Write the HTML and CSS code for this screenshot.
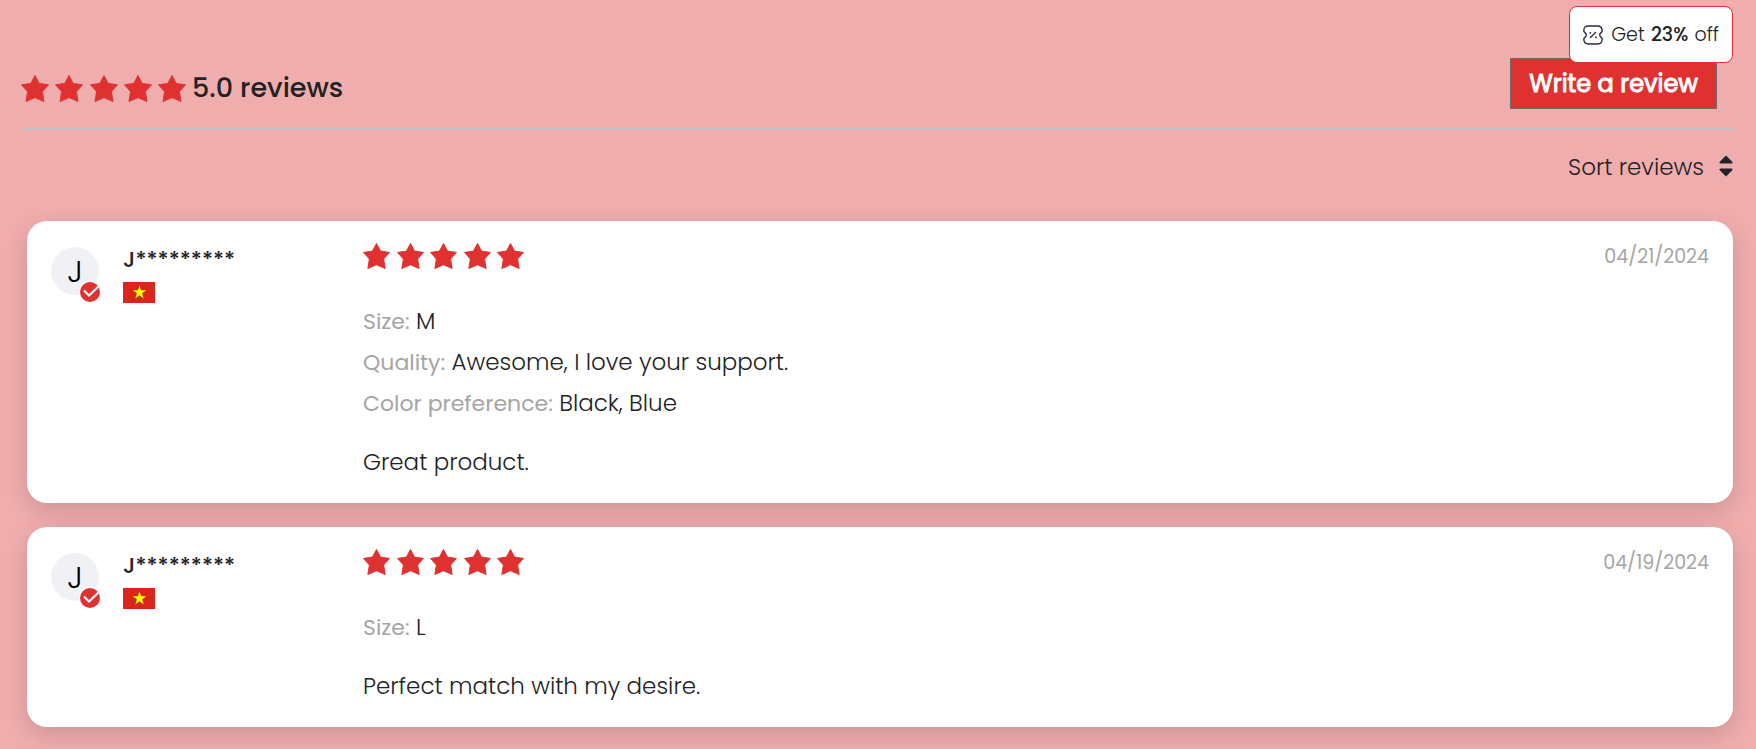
FILE: index.html
```
<!DOCTYPE html>
<html lang="en">
<head>
    <meta charset="UTF-8">
    <meta name="viewport" content="width=device-width, initial-scale=1.0">
    <title>Customer Reviews</title>
    <link rel="stylesheet" href="styles.css">
</head>
<body>
    <!-- shared icons -->
    <svg class="sprite" aria-hidden="true">
        <symbol id="star" viewBox="0 0 28 27">
            <path d="M14 0.5 L18.2 8.4 L27.5 9.8 L21.4 16.6 L23 26.5 L14 22.6 L5 26.5 L6.6 16.6 L0.5 9.8 L9.8 8.4 Z" stroke-width="1" stroke-linejoin="round"/>
        </symbol>
        <symbol id="check" viewBox="0 0 22 22">
            <circle cx="11" cy="11" r="11" fill="#fff"/>
            <circle cx="11" cy="11" r="10" fill="#e03131"/>
            <path d="M5 9.5 L10 14.5 L19.5 5.5" fill="none" stroke="#fff" stroke-width="2"/>
        </symbol>
        <symbol id="flag" viewBox="0 0 32 21">
            <path d="M0 0H32V21H0Z" fill="#da251d"/>
            <path d="M16.5 3.2 L18.1 8.2 H23.3 L19.1 11.3 L20.7 16.4 L16.5 13.3 L12.3 16.4 L13.9 11.3 L9.7 8.2 H14.9 Z" fill="#ff0"/>
        </symbol>
    </svg>

    <a class="discount" href="#">
        <svg width="20" height="20" viewBox="0 0 20 20" fill="none" stroke="#292d42" stroke-width="1.4" stroke-linecap="round" aria-hidden="true">
            <path d="M5.5 1 H14.5 C18 1 19.2 2.4 19.2 6 C19.2 7.3 16.7 7.7 16.7 10 C16.7 12.3 19.2 12.7 19.2 14 C19.2 17.6 18 19 14.5 19 H5.5 C2 19 0.8 17.6 0.8 14 C0.8 12.7 3.3 12.3 3.3 10 C3.3 7.7 0.8 7.3 0.8 6 C0.8 2.4 2 1 5.5 1 Z"/>
            <path d="M7.5 12.5 L12.5 7.5"/>
            <path d="M7.3 7.8 V7.9 M12.9 12.3 V12.4" stroke-width="1.8"/>
        </svg>
        <span>Get <b>23%</b> off</span>
    </a>

    <div class="container">
        <div class="header">
            <div class="summary">
                <div class="stars stars-large" role="img" aria-label="5 out of 5 stars">
                    <svg><use href="#star"/></svg><svg><use href="#star"/></svg><svg><use href="#star"/></svg><svg><use href="#star"/></svg><svg><use href="#star"/></svg>
                </div>
                <h2>5.0 reviews</h2>
            </div>
            <button class="write-btn" type="button">Write a review</button>
        </div>

        <div class="sort">
            <select aria-label="Sort reviews">
                <option>Sort reviews</option>
            </select>
            <svg class="sort-icon" width="14" height="22" viewBox="0 0 14 22" fill="#212529" aria-hidden="true">
                <path d="M7 0.5 L13.5 7 Q14 8.5 12.5 8.5 H1.5 Q0 8.5 0.5 7 Z"/>
                <path d="M7 21.5 L13.5 15 Q14 13.5 12.5 13.5 H1.5 Q0 13.5 0.5 15 Z"/>
            </svg>
        </div>

        <div class="review-list">
            <div class="review">
                <div class="author">
                    <div class="avatar">J<svg class="verified"><use href="#check"/></svg></div>
                    <div>
                        <div class="name">J*********</div>
                        <svg class="flag" role="img" aria-label="Vietnam"><use href="#flag"/></svg>
                    </div>
                </div>
                <div class="content">
                    <div class="top">
                        <div class="stars" role="img" aria-label="5 out of 5 stars">
                            <svg><use href="#star"/></svg><svg><use href="#star"/></svg><svg><use href="#star"/></svg><svg><use href="#star"/></svg><svg><use href="#star"/></svg>
                        </div>
                        <div class="date">04/21/2024</div>
                    </div>
                    <div class="details">
                        <div><span>Size:</span> M</div>
                        <div><span>Quality:</span> Awesome, I love your support.</div>
                        <div><span>Color preference:</span> Black, Blue</div>
                    </div>
                    <p>Great product.</p>
                </div>
            </div>

            <div class="review">
                <div class="author">
                    <div class="avatar">J<svg class="verified"><use href="#check"/></svg></div>
                    <div>
                        <div class="name">J*********</div>
                        <svg class="flag" role="img" aria-label="Vietnam"><use href="#flag"/></svg>
                    </div>
                </div>
                <div class="content">
                    <div class="top">
                        <div class="stars" role="img" aria-label="5 out of 5 stars">
                            <svg><use href="#star"/></svg><svg><use href="#star"/></svg><svg><use href="#star"/></svg><svg><use href="#star"/></svg><svg><use href="#star"/></svg>
                        </div>
                        <div class="date">04/19/2024</div>
                    </div>
                    <div class="details">
                        <div><span>Size:</span> L</div>
                    </div>
                    <p>Perfect match with my desire.</p>
                </div>
            </div>
        </div>
    </div>
</body>
</html>
```
FILE: styles.css
```
* {
    box-sizing: border-box;
}
body {
    margin: 0;
    font-family: 'Poppins', 'Inter', sans-serif;
    font-size: 23px;
    font-weight: 300;
    color: #212224;
    background-color: #f0adae;
}
.sprite {
    position: absolute;
    width: 0;
    height: 0;
}
.container {
    padding: 58px 23px 22px 21px;
}
.header {
    display: flex;
    justify-content: space-between;
    align-items: flex-start;
    padding: 0 16px 19px 0;
    border-bottom: 2px solid #c4c2c2;
}
.summary {
    display: flex;
    align-items: center;
    gap: 6px;
    padding-top: 10px;
}
.summary h2 {
    margin: 0;
    font-size: 27px;
    font-weight: 500;
    line-height: 40px;
}
.stars {
    display: flex;
    justify-content: space-between;
    width: 161px;
    height: 26px;
}
.stars svg {
    width: 27px;
    height: 26px;
    fill: #e03131;
    stroke: #e03131;
}
.stars-large {
    width: 165px;
    height: 27px;
}
.stars-large svg {
    width: 28px;
    height: 27px;
}
.write-btn {
    height: 51px;
    padding: 0 18px;
    border: 1px solid #6c6c6c;
    background-color: #e03131;
    color: white;
    font-family: inherit;
    font-size: 24px;
    font-weight: 400;
    -webkit-text-stroke: 1px white;
    cursor: pointer;
}
.discount {
    position: absolute;
    top: 6px;
    right: 23px;
    height: 57px;
    display: flex;
    align-items: center;
    gap: 8px;
    padding: 0 13px;
    border: 1px solid #e03131;
    border-radius: 8px;
    background: white;
    color: #212224;
    font-size: 19px;
    text-decoration: none;
}
.discount b {
    margin: 0 1px;
    font-weight: 500;
}
.sort {
    position: relative;
    width: fit-content;
    margin: 17px 0 0 auto;
}
.sort select {
    display: block;
    appearance: none;
    height: 40px;
    padding: 0 29px 0 0;
    border: none;
    background: transparent;
    color: inherit;
    font-family: inherit;
    font-size: 23px;
    font-weight: 300;
    cursor: pointer;
}
.sort-icon {
    position: absolute;
    right: 0;
    top: 8px;
    pointer-events: none;
}
.review-list {
    display: grid;
    gap: 24px;
    margin: 34px 0 0 6px;
}
.review {
    display: flex;
    padding: 22px 24px 20px;
    border-radius: 20px;
    background: white;
    box-shadow: 0 8px 24px rgba(0,0,0,0.15);
}
.author {
    display: flex;
    gap: 24px;
    width: 312px;
    padding-top: 4px;
    flex-shrink: 0;
}
.avatar {
    position: relative;
    width: 48px;
    height: 48px;
    border-radius: 50%;
    background: #f0f1f5;
    color: black;
    font-size: 31px;
    line-height: 48px;
    text-align: center;
}
.verified {
    position: absolute;
    right: -2px;
    bottom: -8px;
    width: 22px;
    height: 22px;
}
.name {
    font-size: 22px;
    font-weight: 500;
    line-height: 26px;
}
.flag {
    display: block;
    width: 32px;
    height: 21px;
    margin-top: 9px;
}
.content {
    flex: 1;
}
.top {
    display: flex;
    justify-content: space-between;
    height: 58px;
}
.date {
    color: #a5a5a5;
    font-size: 19px;
    font-weight: 400;
    line-height: 28px;
}
.details, .content p {
    line-height: 41px;
}
.details span {
    color: #a5a5a5;
    font-size: 22px;
    font-weight: 400;
}
.content p {
    margin: 18px 0 0;
}
```
